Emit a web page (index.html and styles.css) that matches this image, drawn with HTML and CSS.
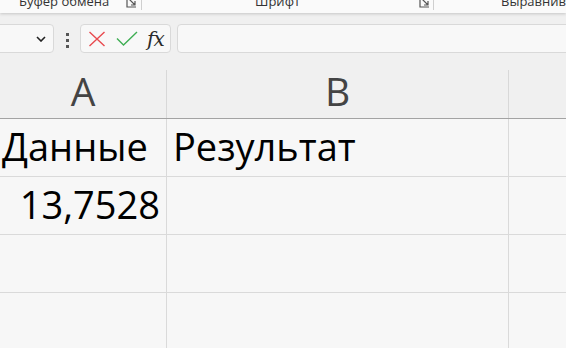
FILE: index.html
```html
<!DOCTYPE html>
<html lang="ru">
<head>
<meta charset="utf-8">
<link rel="stylesheet" href="styles.css">
</head>
<body>
<div class="ribbon">
  <div class="grp g1"><span class="lbl">Буфер обмена</span><svg class="launch" viewBox="0 0 11 11" width="11" height="11"><path d="M1 0V10H10" fill="none" stroke="#555" stroke-width="1.2"/><path d="M3 2L9 8M9 4V8H5" fill="none" stroke="#555" stroke-width="1.2"/></svg></div>
  <div class="sep"></div>
  <div class="grp g2"><span class="lbl">Шрифт</span><svg class="launch" viewBox="0 0 11 11" width="11" height="11"><path d="M1 0V10H10" fill="none" stroke="#555" stroke-width="1.2"/><path d="M3 2L9 8M9 4V8H5" fill="none" stroke="#555" stroke-width="1.2"/></svg></div>
  <div class="sep"></div>
  <div class="grp g3"><span class="lbl">Выравнивание</span></div>
</div>
<div class="toolbar">
  <div class="box namebox">
    <svg class="chev" viewBox="0 0 10 6" width="10" height="6"><path d="M1 1L5 5L9 1" fill="none" stroke="#222" stroke-width="1.6"/></svg>
  </div>
  <div class="dots"><i></i><i></i><i></i></div>
  <div class="box actions">
    <svg viewBox="0 0 18 16" width="18" height="16"><path d="M1.5 1L16.5 15M16.5 1L1.5 15" stroke="#e84a4f" stroke-width="1.4" fill="none"/></svg>
    <svg viewBox="0 0 22 15" width="22" height="15"><path d="M1 7.5L7.5 14L21 1" stroke="#3fae54" stroke-width="1.4" fill="none"/></svg>
    <span class="fx">fx</span>
  </div>
  <div class="box formula"></div>
</div>
<div class="sheet">
  <div class="row head">
    <div class="cell ca"><span>A</span></div>
    <div class="cell cb"><span>B</span></div>
    <div class="cell cc"></div>
  </div>
  <div class="row">
    <div class="cell ca txt left">Данные</div>
    <div class="cell cb txt left pb">Результат</div>
    <div class="cell cc"></div>
  </div>
  <div class="row">
    <div class="cell ca txt right">13,7528</div>
    <div class="cell cb"></div>
    <div class="cell cc"></div>
  </div>
  <div class="row">
    <div class="cell ca"></div>
    <div class="cell cb"></div>
    <div class="cell cc"></div>
  </div>
  <div class="row">
    <div class="cell ca"></div>
    <div class="cell cb"></div>
    <div class="cell cc"></div>
  </div>
</div>
</body>
</html>
```
FILE: styles.css
```css
* { box-sizing: border-box; }
html, body { margin: 0; padding: 0; }
body {
  width: 566px;
  height: 348px;
  overflow: hidden;
  background: #f7f7f7;
  font-family: "Open Sans", "Noto Sans", sans-serif;
}
.ribbon {
  height: 13px;
  background: #fafafa;
  display: flex;
  overflow: hidden;
  position: relative;
  z-index: 1;
  box-shadow: 0 1px 3px rgba(0,0,0,0.18);
}
.grp {
  display: flex;
  align-items: flex-end;
  height: 13px;
  flex: none;
}
.lbl {
  font-size: 13px;
  line-height: 13px;
  color: #333;
  white-space: nowrap;
  margin-bottom: 5px;
}
.launch { margin-bottom: 5px; flex: none; }
.g1 { width: 141px; padding-left: 19px; }
.g1 .launch { margin-left: auto; margin-right: 4px; }
.g2 { width: 291px; padding-left: 113px; }
.g2 .launch { margin-left: auto; margin-right: 3px; }
.g3 { padding-left: 67px; }
.sep { width: 1px; height: 10px; background: #cfcfcf; flex: none; }
.toolbar {
  height: 53px;
  background: #f0f0f0;
  display: flex;
  align-items: flex-start;
  padding-top: 11px;
}
.box {
  height: 29px;
  background: #f8f8f8;
  border: 1px solid #d9d9d9;
  border-radius: 4px;
  flex: none;
  display: flex;
  align-items: center;
}
.namebox {
  width: 65px;
  margin-left: -11px;
  justify-content: flex-end;
  padding-right: 7px;
}
.dots {
  width: 26px;
  display: flex;
  flex-direction: column;
  align-items: center;
  gap: 3px;
  padding-top: 9px;
  flex: none;
}
.dots i { display: block; width: 3px; height: 3px; background: #555; }
.actions {
  width: 91px;
  padding-left: 7px;
  gap: 10px;
}
.fx {
  font-family: "DejaVu Serif", "Liberation Serif", serif;
  font-style: italic;
  font-size: 20px;
  color: #2b2b2b;
  letter-spacing: -1px;
  margin-left: -1px;
}
.formula { margin-left: 6px; flex: 1; margin-right: -10px; }
.sheet { background: #f7f7f7; }
.row {
  display: grid;
  grid-template-columns: 167px 342px 1fr;
  height: 58px;
  border-bottom: 1px solid #dadada;
}
.cell { border-right: 1px solid #dadada; }
.cc { border-right: 0; }
.head {
  height: 54px;
  background: #f0f0f0;
  border-bottom: 1px solid #a3a3a3;
  margin-top: -1px;
}
.head .cell {
  margin-top: 5px;
  display: flex;
  justify-content: center;
  align-items: flex-start;
  font-size: 39px;
  line-height: 39px;
  color: #444;
  padding-top: 1px;
  border-right-color: #d8d8d8;
}
.txt {
  font-size: 38px;
  color: #000;
  display: flex;
  align-items: flex-end;
  line-height: 1;
  padding-bottom: 11px;
  white-space: nowrap;
}
.left { padding-left: 2px; }
.pb { padding-left: 6px; }
.right { justify-content: flex-end; padding-right: 6px; }
```
